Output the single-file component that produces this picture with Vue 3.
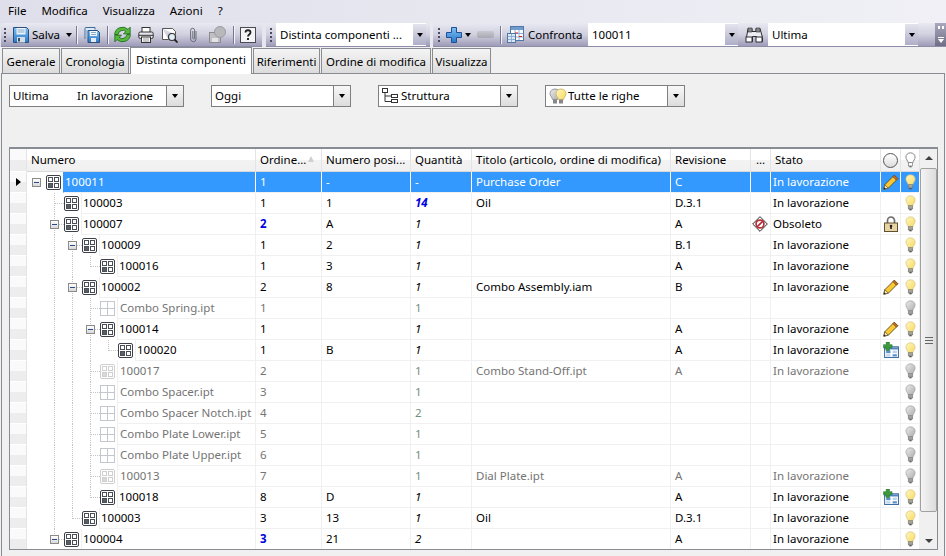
<script setup>
import { computed } from 'vue'

const raw = [
  { l: 0, exp: 1, ic: 'asm', n: '100011', o: '1', p: '-', q: '-', t: 'Purchase Order', r: 'C', s: 'In lavorazione', a: 'pencil', sel: 1 },
  { l: 1, ic: 'asm', n: '100003', o: '1', p: '1', q: '14', qs: 'bb', t: 'Oil', r: 'D.3.1', s: 'In lavorazione' },
  { l: 1, exp: 1, ic: 'asm', n: '100007', o: '2', ob: 1, p: 'A', q: '1', qs: 'it', t: '', r: 'A', f: 1, s: 'Obsoleto', a: 'lock' },
  { l: 2, exp: 1, ic: 'asm', n: '100009', o: '1', p: '2', q: '1', qs: 'it', t: '', r: 'B.1', s: 'In lavorazione' },
  { l: 3, ic: 'asm', n: '100016', o: '1', p: '3', q: '1', qs: 'it', t: '', r: 'A', s: 'In lavorazione' },
  { l: 2, exp: 1, ic: 'asm', n: '100002', o: '2', p: '8', q: '1', qs: 'it', t: 'Combo Assembly.iam', r: 'B', s: 'In lavorazione', a: 'pencil' },
  { l: 3, ic: 'part', n: 'Combo Spring.ipt', o: '1', p: '', q: '1', t: '', r: '', s: '', g: 1 },
  { l: 3, exp: 1, ic: 'asm', n: '100014', o: '1', p: '', q: '1', qs: 'it', t: '', r: 'A', s: 'In lavorazione', a: 'pencil' },
  { l: 4, ic: 'asm', n: '100020', o: '1', p: 'B', q: '1', qs: 'it', t: '', r: 'A', s: 'In lavorazione', a: 'addb' },
  { l: 3, ic: 'asmg', n: '100017', o: '2', p: '', q: '1', t: 'Combo Stand-Off.ipt', r: 'A', s: 'In lavorazione', g: 1 },
  { l: 3, ic: 'part', n: 'Combo Spacer.ipt', o: '3', p: '', q: '1', t: '', r: '', s: '', g: 1 },
  { l: 3, ic: 'part', n: 'Combo Spacer Notch.ipt', o: '4', p: '', q: '2', t: '', r: '', s: '', g: 1 },
  { l: 3, ic: 'part', n: 'Combo Plate Lower.ipt', o: '5', p: '', q: '1', t: '', r: '', s: '', g: 1 },
  { l: 3, ic: 'part', n: 'Combo Plate Upper.ipt', o: '6', p: '', q: '1', t: '', r: '', s: '', g: 1 },
  { l: 3, ic: 'asmg', n: '100013', o: '7', p: '', q: '1', t: 'Dial Plate.ipt', r: 'A', s: 'In lavorazione', g: 1 },
  { l: 3, ic: 'asm', n: '100018', o: '8', p: 'D', q: '1', qs: 'it', t: '', r: 'A', s: 'In lavorazione', a: 'addb' },
  { l: 2, ic: 'asm', n: '100003', o: '3', p: '13', q: '1', qs: 'it', t: 'Oil', r: 'D.3.1', s: 'In lavorazione' },
  { l: 1, exp: 1, ic: 'asm', n: '100004', o: '3', ob: 1, p: '21', q: '2', qs: 'it', t: '', r: 'A', s: 'In lavorazione' }
]

const rows = computed(() => raw.map((row, i) => {
  const guides = []
  for (let k = 1; k <= row.l; k++) {
    let more = false
    for (let j = i + 1; j < raw.length; j++) {
      if (raw[j].l < k) break
      if (raw[j].l === k) { more = true; break }
    }
    if (more) guides.push({ k, h: 21 })
    else if (k === row.l) guides.push({ k, h: 11 })
  }
  return { ...row, guides }
}))

const gy = g => ({ left: 9 + 18 * g.k + 'px', height: g.h + 'px' })
const stub = l => ({ left: 9 + 18 * l + 'px', width: '10px' })
const indent = l => ({ width: 36 + 18 * l + 'px' })
const offs = l => ({ left: 5 + 18 * l + 'px' })
const icoff = l => ({ left: 19 + 18 * l + 'px' })
</script>

<template>
  <div class="app">
    <svg class="defs" width="0" height="0">
      <defs>
        <linearGradient id="by" x1="0" y1="0" x2="1" y2="1"><stop offset="0" stop-color="#fff8c4"/><stop offset="1" stop-color="#f8d85c"/></linearGradient>
        <linearGradient id="bg" x1="0" y1="0" x2="1" y2="1"><stop offset="0" stop-color="#ececec"/><stop offset="1" stop-color="#acacac"/></linearGradient>
        <linearGradient id="bl" x1="0" y1="0" x2="0" y2="1"><stop offset="0" stop-color="#7cc0f2"/><stop offset="1" stop-color="#2a78c8"/></linearGradient>
      </defs>
      <symbol id="bulby" viewBox="0 0 12 17">
        <path d="M6 .7C3 .7 1 2.800 1 5.300c0 2.500 2 3.700 2.500 6.200h5C9 9 11 7.800 11 5.300 11 2.800 9 .7 6 .7z" fill="url(#by)" stroke="#d4c484" stroke-width=".8"/>
        <rect x="3.500" y="11.500" width="5" height="3.500" fill="#a4a49a" stroke="#6f6f66" stroke-width=".6"/><rect x="4.700" y="15" width="2.600" height="1.500" fill="#555"/>
      </symbol>
      <symbol id="bulbg" viewBox="0 0 12 17">
        <path d="M6 .7C3 .7 1 2.800 1 5.300c0 2.500 2 3.700 2.500 6.200h5C9 9 11 7.800 11 5.300 11 2.800 9 .7 6 .7z" fill="url(#bg)" stroke="#a0a0a0" stroke-width=".8"/>
        <rect x="3.500" y="11.500" width="5" height="3.500" fill="#a0a0a0" stroke="#787878" stroke-width=".6"/><rect x="4.700" y="15" width="2.600" height="1.500" fill="#666"/>
      </symbol>
      <symbol id="bulbw" viewBox="0 0 12 17">
        <path d="M6 .7C3 .7 1 2.800 1 5.300c0 2.500 2 3.700 2.500 6.200h5C9 9 11 7.800 11 5.300 11 2.800 9 .7 6 .7z" fill="#fff" stroke="#707070" stroke-width=".9"/>
        <rect x="3.700" y="11.500" width="4.600" height="3.500" fill="#fff" stroke="#707070" stroke-width=".7"/><rect x="4.700" y="15" width="2.600" height="1.500" fill="#707070"/>
      </symbol>
      <symbol id="asm" viewBox="0 0 15 15">
        <rect x=".5" y=".5" width="14" height="14" rx="1.500" fill="#fff" stroke="#3c4048"/>
        <rect x="2.500" y="2.500" width="4" height="4" fill="#fff" stroke="#4a4e56"/><rect x="8.500" y="2.500" width="4" height="4" fill="#fff" stroke="#4a4e56"/>
        <rect x="2.500" y="8.500" width="4" height="4" fill="#5a5e66" stroke="#4a4e56"/><rect x="8.500" y="8.500" width="4" height="4" fill="#fff" stroke="#4a4e56"/>
      </symbol>
      <symbol id="asmg" viewBox="0 0 15 15">
        <rect x=".5" y=".5" width="14" height="14" rx="1.500" fill="#fff" stroke="#cfcfcf"/>
        <rect x="2.500" y="2.500" width="4" height="4" fill="#fff" stroke="#d0d0d0"/><rect x="8.500" y="2.500" width="4" height="4" fill="#fff" stroke="#d0d0d0"/>
        <rect x="2.500" y="8.500" width="4" height="4" fill="#d8d8d8" stroke="#d0d0d0"/><rect x="8.500" y="8.500" width="4" height="4" fill="#fff" stroke="#d0d0d0"/>
      </symbol>
      <symbol id="part" viewBox="0 0 15 15">
        <rect x=".5" y=".5" width="14" height="14" fill="#fff" stroke="#c4c8cc"/><path d="M7.500 1v13M1 7.500h13" stroke="#c4c8cc"/>
      </symbol>
      <symbol id="pencil" viewBox="0 0 16 16">
        <path d="M.8 15.200l1-4.500L11.300 1.200l3.500 3.500L5.300 14.200z" fill="#f9c832" stroke="#5a4a20" stroke-width=".9" stroke-linejoin="round"/>
        <path d="M.8 15.200l1-4.500 3.500 3.500z" fill="#f7e8cc" stroke="#5a4a20" stroke-width=".7"/><path d="M.8 15.200l.5-2 1.500 1.500z" fill="#222"/>
        <path d="M11.300 1.200l3.500 3.500 -1.500 1.500 -3.500 -3.500z" fill="#c86a28" stroke="#5a4a20" stroke-width=".6"/>
      </symbol>
      <symbol id="lock" viewBox="0 0 15 16">
        <path d="M4 7V4.500a3.500 3.500 0 0 1 7 0V7" fill="none" stroke="#6e6e6e" stroke-width="1.700"/>
        <rect x="1" y="7" width="13" height="8.500" fill="#e8d3a4" stroke="#5f5030"/><path d="M7.500 9v4" stroke="#222" stroke-width="1.600"/><circle cx="7.500" cy="10" r="1.300" fill="#222"/>
      </symbol>
      <symbol id="addb" viewBox="0 0 15 15">
        <rect x="1.500" y="4.500" width="13" height="10" fill="#fff" stroke="#3f6fa6"/><rect x="2" y="5" width="12" height="2" fill="#4f86c0"/>
        <rect x="3" y="8" width="4" height="2.500" fill="#5a90c8"/><rect x="9" y="8" width="4" height="2.500" fill="#bcd4ee"/><rect x="3" y="11.500" width="4" height="2" fill="#bcd4ee"/><rect x="9" y="11.500" width="4" height="2" fill="#5a90c8"/>
        <path d="M3 0h3v2.500h2.500v3H6V8H3V5.500H.5v-3H3z" fill="#3c9a3c" stroke="#1f6b1f" stroke-width=".5"/>
      </symbol>
      <symbol id="obs" viewBox="0 0 17 17">
        <path d="M8.500 .7l7.800 7.800-7.800 7.800L.7 8.500z" fill="#fff" stroke="#222" stroke-width="1"/>
        <circle cx="8.500" cy="8.500" r="4.200" fill="#fff" stroke="#b8303a" stroke-width="1.800"/><path d="M5.700 11.300l5.600-5.600" stroke="#b8303a" stroke-width="1.800"/>
      </symbol>
      <symbol id="save" viewBox="0 0 16 16">
        <path d="M.5.500h13l2 2v13H.5z" fill="url(#bl)" stroke="#2d4f7c"/><rect x="3.500" y="1" width="9" height="6.500" fill="#eef4fa"/><path d="M4.500 3h7M4.500 5h7" stroke="#8aa8c8"/>
        <rect x="4" y="10" width="8" height="5.500" fill="#d4dce4"/><rect x="5" y="11" width="2" height="3.500" fill="#33506e"/>
      </symbol>
      <symbol id="copy" viewBox="0 0 16 16">
        <path d="M1 12V1.500A1 1 0 0 1 2 .500h9v2" fill="#dceaf6" stroke="#3f6a9c"/>
        <path d="M4 3.500h9.500l2 2v10H4z" fill="url(#bl)" stroke="#2d4f7c"/>
        <path d="M2 4h1.500M2 6h1.500M2 8h1.500M2 10h1.500" stroke="#6f9ac4"/>
        <rect x="6" y="4" width="7" height="5" fill="#f2f7fc"/><path d="M7 5.500h5M7 7.500h5" stroke="#8aa8c8"/><rect x="7" y="11" width="5" height="4" fill="#e4ebf2"/>
      </symbol>
      <symbol id="refresh" viewBox="1.500 1.500 14 13">
        <path d="M2 8a6.500 6.500 0 0 1 11-4.200l1.800-1.800v5.500H9.300l2-2A4 4 0 0 0 4.800 8z" fill="#57b83c" stroke="#1d6a1d" stroke-width=".7" stroke-linejoin="round"/>
        <path d="M15 8a6.500 6.500 0 0 1-11 4.200L2.200 14V8.500h5.500l-2 2A4 4 0 0 0 12.200 8z" fill="#57b83c" stroke="#1d6a1d" stroke-width=".7" stroke-linejoin="round"/>
      </symbol>
      <symbol id="print" viewBox="0 0 16 16">
        <rect x="4" y=".5" width="8" height="5" fill="#fff" stroke="#333"/><rect x=".8" y="5" width="14.400" height="6.500" rx="1.500" fill="#e6e6ee" stroke="#333"/>
        <path d="M1 8.300h14" stroke="#333"/><rect x="3.500" y="10" width="9" height="5.500" fill="#fff" stroke="#333"/><path d="M5 12h6M5 14h6" stroke="#999"/>
      </symbol>
      <symbol id="preview" viewBox="0 0 16 16">
        <path d="M.5 1.500h10l3 3v3M.5 1.500v11h6" fill="#fff" stroke="#555"/><circle cx="10" cy="10" r="3.500" fill="#e2eef6" stroke="#333" stroke-width="1.200"/><path d="M12.500 12.500l3 3" stroke="#222" stroke-width="1.800"/>
      </symbol>
      <symbol id="clip" viewBox="0 0 9 16">
        <path d="M7 4v8a2.700 2.700 0 0 1-5.400 0V3.300a2 2 0 0 1 4 0V11a.9.9 0 0 1-1.800 0V4" fill="none" stroke="#6a6e76" stroke-width="1"/>
      </symbol>
      <symbol id="disk" viewBox="0 0 17 17">
        <rect x=".5" y="6.500" width="11" height="10" fill="#c0c0c4" stroke="#8c8c90"/><rect x="3" y="12" width="6" height="4" fill="#e4e4e6"/>
        <circle cx="11" cy="6" r="5.500" fill="#b8b8bc" stroke="#9c9ca0"/>
      </symbol>
      <symbol id="help" viewBox="0 0 16 16">
        <rect x=".5" y=".5" width="15" height="15" fill="#f4f4f8" stroke="#4a4a52"/><path d="M5.500 5.500c0-3 5-3 5 0 0 2-2.500 2-2.500 4" fill="none" stroke="#222" stroke-width="1.800"/><rect x="7" y="11" width="2" height="2" fill="#222"/>
      </symbol>
      <symbol id="plus" viewBox="0 0 16 16">
        <path d="M5.500.5h5v5h5v5h-5v5h-5v-5h-5v-5h5z" fill="url(#bl)" stroke="#1d4f9a"/>
      </symbol>
      <symbol id="table" viewBox="0 0 17 17">
        <rect x="3.500" y=".5" width="13" height="14" fill="#fff" stroke="#4f78a8"/><rect x="4" y="1" width="12" height="3" fill="#6f9ccc"/><path d="M4 7.500h12M4 11h12M8 4v10M12 4v10" stroke="#8fb0d2"/>
        <path d="M8 7h3M12 10.500h3" stroke="#d82020" stroke-width="1.200"/><rect x=".5" y="7.500" width="8" height="9" fill="#dbe7f3" stroke="#4f78a8"/><path d="M1 10.500h7M1 13.500h7M4.500 8v8" stroke="#8fb0d2"/>
      </symbol>
      <symbol id="bino" viewBox="0 0 18 16">
        <path d="M3 1.500h4v3h4v-3h4l2.500 9v4h-6v-5h-4v5h-6v-4z" fill="#ececf2" stroke="#2c2c34"/><path d="M3 1h4v4H3zM11 1h4v4h-4z" fill="#888" stroke="#2c2c34" stroke-width=".6"/>
        <rect x="1" y="10" width="6" height="5" fill="#fff" stroke="#2c2c34"/><rect x="11" y="10" width="6" height="5" fill="#fff" stroke="#2c2c34"/>
      </symbol>
      <symbol id="tree" viewBox="0 0 16 16">
        <rect x=".5" y=".5" width="5" height="4" fill="#fff" stroke="#333"/><rect x="9.500" y="6.500" width="6" height="3" fill="#fff" stroke="#333"/><rect x="9.500" y="11.500" width="6" height="3" fill="#fff" stroke="#333"/>
        <path d="M3 4.500v9h6.500M3 8h6.500" fill="none" stroke="#333"/>
      </symbol>
      <symbol id="bulbs" viewBox="0 0 18 17">
        <path d="M6 1C3 1 1 3 1 5.500c0 2.500 2 3.500 2.500 6h5C9 9 11 8 11 5.500 11 3 9 1 6 1z" fill="url(#bg)" stroke="#999"/><rect x="4" y="11.500" width="4" height="4" fill="#888"/>
        <path d="M12 1C9 1 7 3 7 5.500c0 2.500 2 3.500 2.500 6h5c.5-2.500 2.500-3.500 2.500-6C17 3 15 1 12 1z" fill="url(#by)" stroke="#d0bc70"/><rect x="10" y="11.500" width="4" height="4" fill="#888"/>
      </symbol>
    </svg>

    <div class="menubar">
      <span>File</span><span>Modifica</span><span>Visualizza</span><span>Azioni</span><span>?</span>
    </div>

    <div class="toolstrip">
      <div class="band b1">
        <i class="grip"></i>
        <svg class="ic16 m7"><use href="#save"/></svg>
        <span class="tt salva m3">Salva</span>
        <i class="arr m7"></i>
        <i class="sep m4"></i>
        <svg class="ic16 m7"><use href="#copy"/></svg>
        <i class="sep m7"></i>
        <svg class="ic17 m6"><use href="#refresh"/></svg>
        <svg class="ic16 m7"><use href="#print"/></svg>
        <svg class="ic16 m8"><use href="#preview"/></svg>
        <svg class="clip m11"><use href="#clip"/></svg>
        <svg class="ic17 m11"><use href="#disk"/></svg>
        <i class="sep m7"></i>
        <svg class="ic16 m6"><use href="#help"/></svg>
      </div>
      <div class="band b2">
        <i class="grip"></i>
        <div class="tcombo w150 m4"><span>Distinta componenti ...</span><b class="tbtn"><i class="arr"></i></b></div>
      </div>
      <div class="band b3">
        <i class="grip"></i>
        <svg class="ic16 m6"><use href="#plus"/></svg>
        <i class="arr m3"></i>
        <i class="minus m6"></i>
        <i class="sep m6"></i>
        <svg class="ic17 m6"><use href="#table"/></svg>
        <span class="tt conf m4">Confronta</span>
        <div class="tcombo w150 m7"><span>100011</span><b class="tbtn"><i class="arr"></i></b></div>
        <svg class="bino m7"><use href="#bino"/></svg>
        <div class="tcombo w150 m5"><span>Ultima</span><b class="tbtn"><i class="arr"></i></b></div>
        <div class="over"><i class="dots2"></i><i class="dash"></i><i class="arw"></i></div>
      </div>
    </div>

    <div class="tabs">
      <div class="tab w1">Generale</div>
      <div class="tab w2">Cronologia</div>
      <div class="tab active">Distinta componenti</div>
      <div class="tab w4">Riferimenti</div>
      <div class="tab w5">Ordine di modifica</div>
      <div class="tab w6">Visualizza</div>
    </div>

    <div class="panel">
      <div class="filters">
        <div class="combo c1"><span class="v v1">Ultima</span><span class="v">In lavorazione</span><b class="cbtn"><i class="arr"></i></b></div>
        <div class="combo c2"><span class="v">Oggi</span><b class="cbtn"><i class="arr"></i></b></div>
        <div class="combo c3"><svg class="ic16"><use href="#tree"/></svg><span class="v">Struttura</span><b class="cbtn"><i class="arr"></i></b></div>
        <div class="combo c4"><svg class="ic18"><use href="#bulbs"/></svg><span class="v">Tutte le righe</span><b class="cbtn"><i class="arr"></i></b></div>
      </div>

      <div class="grid">
        <div class="table">
          <div class="hrow">
            <div class="hc rh"></div>
            <div class="hc">Numero</div>
            <div class="hc sort">Ordine...<i class="tri"></i></div>
            <div class="hc">Numero posi...</div>
            <div class="hc">Quantità</div>
            <div class="hc">Titolo (articolo, ordine di modifica)</div>
            <div class="hc">Revisione</div>
            <div class="hc dots">...</div>
            <div class="hc">Stato</div>
            <div class="hc ctr"><i class="circle"></i></div>
            <div class="hc ctr"><svg class="bulb"><use href="#bulbw"/></svg></div>
          </div>
          <div v-for="(r, i) in rows" :key="i" class="row" :class="{ sel: r.sel, gray: r.g }">
            <div class="rh"><i v-if="r.sel" class="cur"></i></div>
            <div class="treecell">
              <div class="indent" :style="indent(r.l)">
                <i v-for="g in r.guides" :key="g.k" class="gv" :style="gy(g)"></i>
                <i v-if="r.l > 0" class="gh" :style="stub(r.l)"></i>
                <i v-if="r.exp" class="exp" :style="offs(r.l)"></i>
                <svg class="node" :style="icoff(r.l)"><use :href="'#' + r.ic"/></svg>
              </div>
              <div class="tname">{{ r.n }}</div>
            </div>
            <div class="c" :class="{ blue: r.ob }">{{ r.o }}</div>
            <div class="c">{{ r.p }}</div>
            <div class="c" :class="r.qs || 'qg'">{{ r.q }}</div>
            <div class="c">{{ r.t }}</div>
            <div class="c">{{ r.r }}</div>
            <div class="c flag"></div>
            <div class="c st"><svg v-if="r.f" class="obs"><use href="#obs"/></svg>{{ r.s }}</div>
            <div class="c ctr"><svg v-if="r.a" class="ic16b"><use :href="'#' + r.a"/></svg></div>
            <div class="c ctr"><svg class="bulb"><use :href="r.g ? '#bulbg' : '#bulby'"/></svg></div>
          </div>
        </div>
        <div class="scroll">
          <i class="up"></i>
          <div class="thumb"><i class="grips"></i></div>
          <i class="down"></i>
        </div>
      </div>
    </div>
  </div>
</template>

<style>
html, body { margin: 0; padding: 0; background: #f0f0f0; }
</style>

<style scoped>
.app { width: 946px; height: 556px; overflow: hidden; position: relative; font: 11.5px/16px "Noto Sans", "Open Sans", sans-serif; color: #000; background: #f0f0f0; }
.defs { position: absolute; }
i { display: block; font-style: normal; flex: none; }
svg { display: block; flex: none; }
.menubar { height: 23px; box-sizing: border-box; display: flex; align-items: center; padding: 0 0 2px 8px; gap: 15px; background: linear-gradient(90deg, #dfdfeb, #f0f0f6); }
.toolstrip { height: 24px; display: flex; background: linear-gradient(90deg, #e2e2ec, #f0f0f6); }
.band { height: 24px; box-sizing: border-box; display: flex; align-items: center; padding-left: 3px; border-radius: 3px 3px 0 0; background: linear-gradient(#e9e9f2, #d0d0df 50%, #9e9cb8); border-bottom: 1px solid #8d8da8; }
.b1 { margin-left: 1px; width: 261px; }
.b2 { margin-left: 4px; width: 164px; padding-left: 4px; }
.b3 { margin-left: 3px; width: 513px; padding-left: 5px; position: relative; }
.grip { width: 2px; height: 14px; background: repeating-linear-gradient(#4a4a60 0 2px, transparent 2px 4px); }
.m3 { margin-left: 3px; } .m4 { margin-left: 4px; } .m5 { margin-left: 5px; } .m6 { margin-left: 6px; } .m7 { margin-left: 7px; } .m8 { margin-left: 8px; } .m11 { margin-left: 11px; }
.ic16 { width: 16px; height: 16px; }
.ic17 { width: 17px; height: 17px; }
.ic18 { width: 18px; height: 17px; }
.clip { width: 9px; height: 16px; }
.bino { width: 18px; height: 16px; }
.tt { line-height: 16px; white-space: nowrap; }
.salva { width: 27px; }
.conf { width: 53px; }
.arr { width: 0; height: 0; border: 3px solid transparent; border-top: 4px solid #000; border-bottom: 0; }
.sep { width: 1px; height: 18px; background: #77778f; box-shadow: 1px 0 #f4f4f8; }
.minus { width: 17px; height: 7px; border-radius: 2px; background: linear-gradient(#c8c8d0, #a8a8b2); }
.tcombo { height: 23px; box-sizing: border-box; background: #fff; display: flex; align-items: center; padding-left: 4px; position: relative; }
.w150 { width: 150px; }
.tbtn { position: absolute; right: 0; top: 1px; bottom: 1px; width: 14px; display: flex; align-items: center; justify-content: center; background: linear-gradient(#e4e4ee, #aeaec8); border-left: 1px solid #fff; box-sizing: border-box; font-weight: 400; }
.over { position: absolute; right: 0; top: 0; width: 11px; height: 23px; background: linear-gradient(#a8a8be, #6e6e86); display: flex; flex-direction: column; align-items: center; padding-top: 3px; box-sizing: border-box; }
.dots2 { width: 6px; height: 3px; background: repeating-linear-gradient(90deg, #fff 0 2px, transparent 2px 4px); }
.dash { width: 6px; height: 1px; background: #fff; margin-top: 8px; }
.arw { width: 0; height: 0; border: 3px solid transparent; border-top: 4px solid #fff; border-bottom: 0; margin-top: 1px; }
.tabs { height: 26px; display: flex; padding-left: 2px; align-items: flex-end; gap: 1px; position: relative; z-index: 1; }
.tab { height: 25px; box-sizing: border-box; border: 1px solid #8a8c94; border-bottom: 0; background: linear-gradient(#f4f4f4, #dcdcdc); text-align: center; line-height: 25px; white-space: nowrap; }
.w1 { width: 58px; } .w2 { width: 68px; } .w4 { width: 67px; } .w5 { width: 110px; } .w6 { width: 59px; }
.tab.active { width: 122px; height: 27px; background: #fff; border-bottom: 0; line-height: 24px; margin-bottom: -1px; }
.panel { height: 483px; box-sizing: border-box; margin: 0 1px 0 1px; border: 1px solid #8a8c94; border-bottom: 0; padding: 11px 6px 0 7px; background: #f0f0f0; }
.filters { height: 62px; display: flex; align-items: flex-start; }
.combo { height: 22px; box-sizing: border-box; display: flex; align-items: center; border: 1px solid #7f7f7f; background: #fff; position: relative; padding-left: 3px; }
.c1 { width: 175px; }
.c2 { width: 140px; margin-left: 27px; }
.c3 { width: 140px; margin-left: 27px; }
.c4 { width: 140px; margin-left: 27px; }
.c3 .v { margin-left: 3px; }
.c4 .v { margin-left: 1px; }
.v1 { width: 64px; }
.cbtn { position: absolute; right: 0; top: 0; bottom: 0; width: 17px; box-sizing: border-box; border-left: 1px solid #7f7f7f; display: flex; align-items: center; justify-content: center; background: linear-gradient(#f8f8f8, #dcdcdc); }
.grid { width: 929px; height: 403px; box-sizing: border-box; border: 1px solid #8a8c94; border-top-width: 2px; display: flex; background: #fff; }
.table { width: 910px; overflow: hidden; }
.hrow, .row { display: grid; grid-template-columns: 17px 229px 66px 89px 61px 199px 80px 20px 110px 20px 19px; }
.hrow { height: 23px; }
.hc { box-sizing: border-box; padding: 2px 0 0 4px; line-height: 18px; white-space: nowrap; overflow: hidden; border-right: 1px solid #e4e4e6; background: linear-gradient(#fff 50%, #f3f3f3 50%, #f0f0f0); border-bottom: 1px solid #d8d8dc; position: relative; }
.hc.rh { border-right: 1px solid #e4e4e6; padding: 0; }
.hc.dots { text-align: center; padding-left: 0; }
.ctr { display: flex; align-items: center; justify-content: center; padding: 0; }
.circle { width: 13px; height: 13px; border: 1px solid #555; border-radius: 50%; background: linear-gradient(#fff, #dcdcdc); }
.bulb { width: 11px; height: 16px; margin-left: 1px; }
.tri { position: absolute; right: 7px; top: 7px; width: 0; height: 0; border: 3px solid transparent; border-bottom: 6px solid #d0d0d0; border-top: 0; }
.row { height: 21px; }
.rh { box-sizing: border-box; background: linear-gradient(#fafafa 50%, #ededed 50%); border-bottom: 1px solid #fff; border-right: 1px solid #e4e4e6; position: relative; }
.cur { position: absolute; left: 6px; top: 6px; width: 0; height: 0; border: 4px solid transparent; border-left: 5px solid #000; border-right: 0; }
.treecell { display: flex; overflow: hidden; }
.indent { position: relative; flex: none; height: 21px; }
.gv { position: absolute; top: 0; border-left: 1px dotted #c4c4c4; }
.gh { position: absolute; top: 10px; border-top: 1px dotted #c4c4c4; }
.exp { position: absolute; top: 6px; width: 9px; height: 9px; box-sizing: border-box; border: 1px solid #8a8a8a; background: linear-gradient(#fff, #d8d8d8) ; }
.exp::after { content: ""; position: absolute; left: 1px; top: 3px; width: 5px; height: 1px; background: #2a4a8a; }
.node { position: absolute; top: 3px; width: 15px; height: 15px; }
.tname { flex: 1; box-sizing: border-box; padding-left: 1px; line-height: 20px; white-space: nowrap; border-left: 1px solid #f0f0f0; border-bottom: 1px solid #f0f0f0; border-right: 1px solid #f0f0f0; }
.gray .tname { padding-left: 2px; }
.c { box-sizing: border-box; padding-left: 4px; line-height: 20px; white-space: nowrap; overflow: hidden; border-right: 1px solid #f0f0f0; border-bottom: 1px solid #f0f0f0; }
.c.st { padding-left: 2px; display: flex; align-items: center; overflow: visible; position: relative; }
.c.ctr { padding: 0; }
.ic16b { width: 16px; height: 16px; }
.obs { width: 16px; height: 16px; position: absolute; left: -19px; top: 2px; }
.blue { color: #0000e0; font-weight: 700; }
.bb { color: #0000e0; font-weight: 700; font-style: italic; }
.it { font-style: italic; }
.qg { color: #6f9080; }
.gray .c, .gray .tname { color: #747474; }
.gray .qg { color: #6f9080; }
.sel .tname, .sel .c { background: #3399ff; color: #fff; border-color: #fff; border-left-color: transparent; border-bottom-color: #f0f0f0; }
.scroll { flex: 1; position: relative; background: #f0f0f0; }
.up, .down { position: absolute; left: 5px; width: 0; height: 0; border: 4px solid transparent; }
.up { top: 7px; border-bottom: 4px solid #404040; border-top: 0; }
.down { bottom: 6px; border-top: 4px solid #404040; border-bottom: 0; }
.thumb { position: absolute; left: 0; right: 0; top: 19px; height: 344px; box-sizing: border-box; border: 1px solid #a0a0a0; border-radius: 2px; background: linear-gradient(90deg, #f4f4f4, #dcdcdc); display: flex; align-items: center; justify-content: center; }
.grips { width: 8px; height: 7px; background: repeating-linear-gradient(#666 0 1px, transparent 1px 3px); }
</style>
